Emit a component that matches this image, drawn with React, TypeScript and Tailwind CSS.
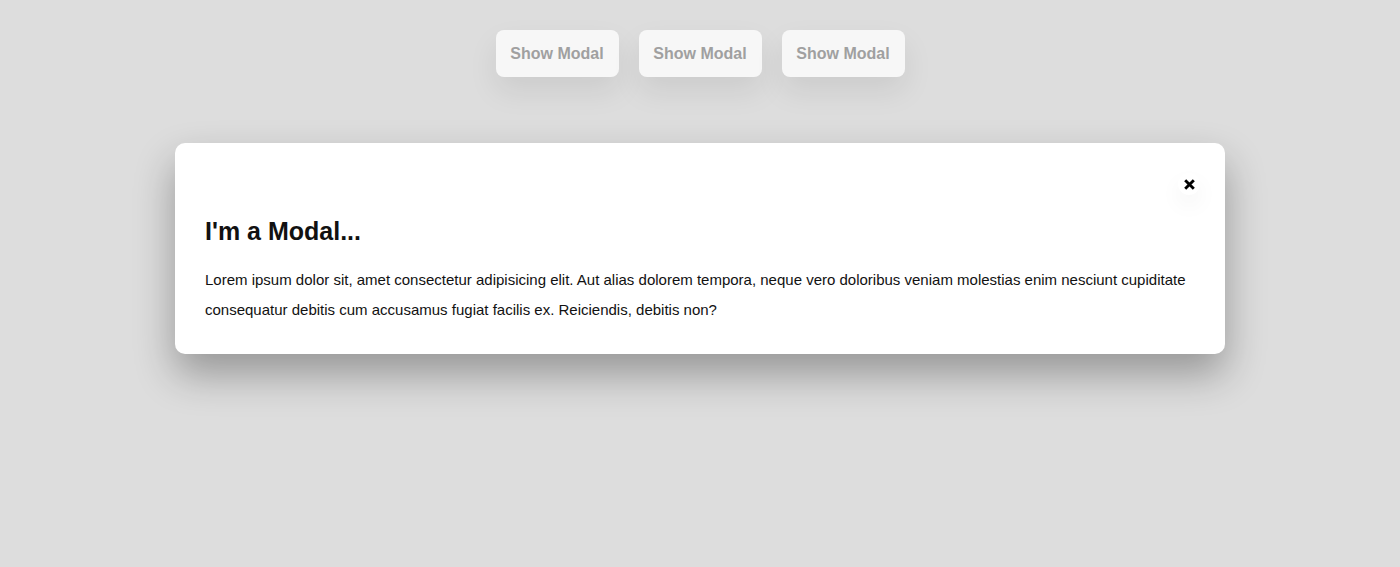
export default function App() {
  return (
    <div className="min-h-[567px] bg-[#dddddd] font-['Liberation_Sans',Arial,sans-serif] pt-[30px]">
      <div className="flex justify-center gap-[20px]">
        {[0, 1, 2].map((i) => (
          <button
            key={i}
            className="h-[47px] w-[123px] rounded-[8px] bg-[#f7f7f7] text-[16px] font-bold text-[#a0a0a0] shadow-[0_14px_30px_rgba(0,0,0,0.08)]"
          >
            Show Modal
          </button>
        ))}
      </div>

      <div className="relative mx-auto mt-[66px] w-[1050px] rounded-[10px] bg-white px-[30px] pt-[30px] pb-[29px] shadow-[0_20px_40px_rgba(0,0,0,0.32)]">
        <button className="absolute top-[30px] right-[25px] flex h-[22px] w-[22px] items-center justify-center rounded-full bg-white shadow-[0_10px_22px_rgba(0,0,0,0.05)]">
          <svg width="11" height="11" viewBox="0 0 10 10">
            <path d="M2 2L8 8M8 2L2 8" stroke="#000" strokeWidth="2.6" strokeLinecap="square" />
          </svg>
        </button>
        <div className="h-[22px]" />
        <h2 className="mt-[22px] text-[25px] leading-[29px] font-bold text-[#111]">I'm a Modal...</h2>
        <p className="mt-[19px] text-[15px] leading-[30px] text-[#111]">
          Lorem ipsum dolor sit, amet consectetur adipisicing elit. Aut alias dolorem tempora, neque vero doloribus veniam molestias enim nesciunt cupiditate consequatur debitis cum accusamus fugiat facilis ex. Reiciendis, debitis non?
        </p>
      </div>
    </div>
  );
}
